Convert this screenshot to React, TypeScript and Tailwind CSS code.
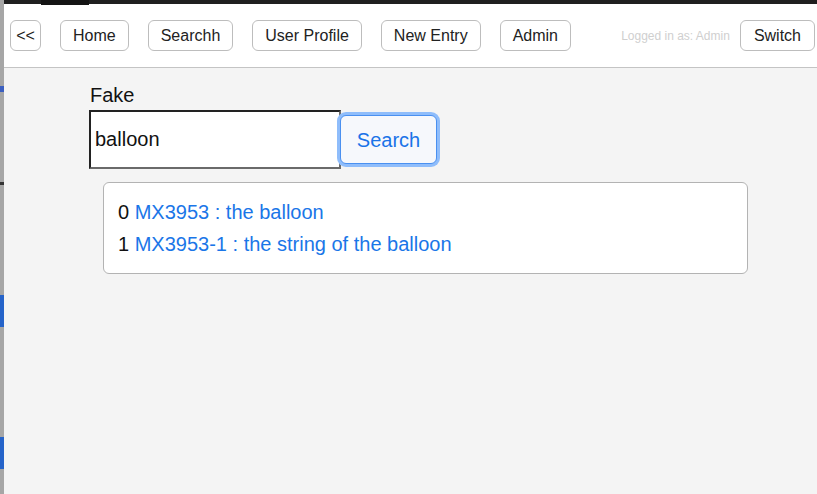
const navItems = ['Home', 'Searchh', 'User Profile', 'New Entry', 'Admin'];

const results = [
  { id: 'MX3953', title: 'the balloon' },
  { id: 'MX3953-1', title: 'the string of the balloon' },
];

function NavButton({ label, className = '' }: { label: string; className?: string }) {
  return (
    <button
      type="button"
      className={`h-[31px] rounded-[6px] border border-[#bdbdbd] bg-white text-[16px] leading-none text-[#222] ${className}`}
    >
      {label}
    </button>
  );
}

export default function App() {
  return (
    <div
      className="flex h-[494px] w-[817px] overflow-hidden bg-[#f4f4f4]"
      style={{ fontFamily: '"Liberation Sans", Arial, sans-serif' }}
    >
      {/* edge of the window behind */}
      <div className="flex w-[4px] shrink-0 flex-col bg-[#a6a6a6]">
        <div className="mt-[86px] h-[6px] bg-[#3b5fc0]" />
        <div className="mt-[90px] h-[3px] bg-[#333]" />
        <div className="mt-[110px] h-[32px] bg-[#2563c9]" />
        <div className="mt-[110px] h-[32px] bg-[#2563c9]" />
      </div>

      <div className="flex min-w-0 flex-1 flex-col">
        <div className="relative h-[4px] shrink-0 bg-[#1f1f1f]">
          <div className="absolute left-[37px] top-0 h-[5px] w-[48px] bg-[#141414]" />
        </div>

        <nav className="flex h-[64px] shrink-0 items-center border-b border-[#c4c4c4] bg-white pl-[6px] pr-[2px]">
          <div className="flex items-center gap-[19px]">
            <NavButton label="<<" className="w-[31px]" />
            {navItems.map((item) => {
              return <NavButton key={item} label={item} className="px-[12px]" />;
            })}
          </div>
          <div className="ml-auto flex items-center gap-[10px]">
            <span className="text-[12px] text-[#cfcfcf]">Logged in as: Admin</span>
            <NavButton label="Switch" className="px-[13px]" />
          </div>
        </nav>

        <main className="flex-1 pl-[85px] pt-[15px]">
          <label className="block pl-[1px] text-[20px] leading-[24px] text-[#111]">Fake</label>
          <div className="mt-[3px] flex items-center">
            <input
              defaultValue="balloon"
              className="h-[59px] w-[252px] border-2 border-t-[#222] border-l-[#222] border-b-[#6a6a6a] border-r-[#6a6a6a] bg-white px-[4px] text-[20px] text-[#111] outline-none"
            />
            <button
              type="button"
              className="ml-[-1px] h-[49px] w-[97px] rounded-[6px] border border-[#4a90f0] bg-[#f6f8fc] text-[20px] text-[#1a73e8] ring-[3px] ring-[#8fbdfb]"
            >
              Search
            </button>
          </div>

          <div className="mt-[13px] ml-[14px] w-[645px] rounded-[6px] border border-[#b3b3b3] bg-white px-[14px] py-[13px]">
            {results.map((r, i) => {
              return (
                <div key={r.id} className="text-[20px] leading-[32px] text-[#111]">
                  {i}{' '}
                  <a href="#" className="text-[#1a76e8]">
                    {r.id} : {r.title}
                  </a>
                </div>
              );
            })}
          </div>
        </main>
      </div>
    </div>
  );
}
